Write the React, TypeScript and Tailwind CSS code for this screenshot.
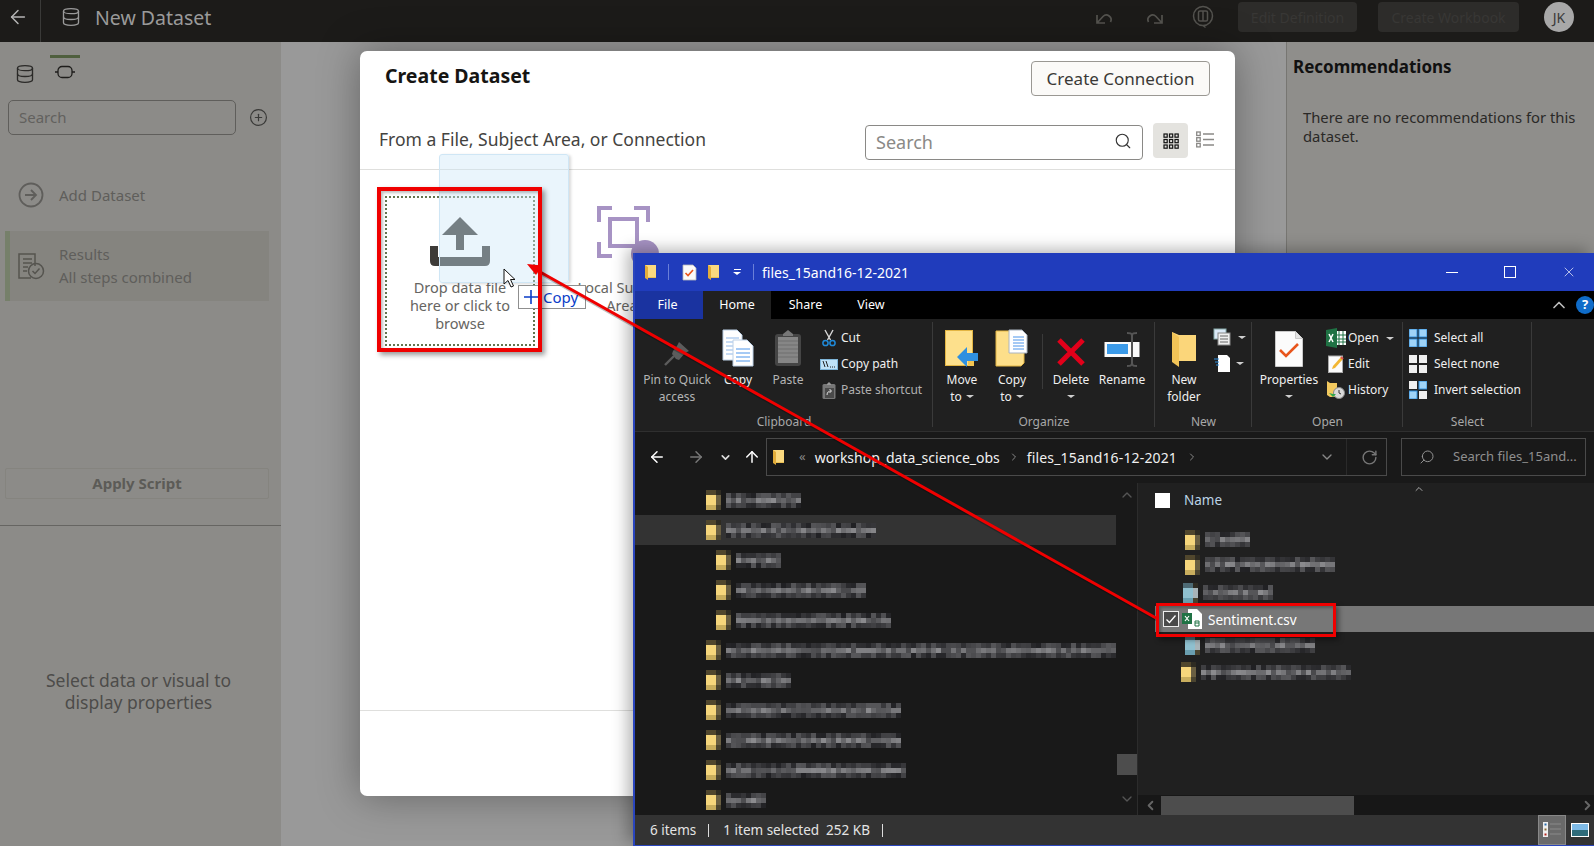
import React from "react";
import { ArrowLeft, ArrowRight, ArrowUp, ChevronDown, ChevronLeft, ChevronRight, ChevronUp, CirclePlus, Database, RotateCw, Search, X } from "lucide-react";

const Caret = ({ className = "" }: { className?: string }) => (
  <span className={"inline-block w-0 h-0 border-l-[4px] border-r-[4px] border-t-[3px] border-l-transparent border-r-transparent border-t-[#cfcfcf] " + className} />
);

function rnd(seed: number, i: number) {
  const x = Math.sin(seed * 97.13 + i * 12.9898) * 43758.5453;
  return x - Math.floor(x);
}

function Mosaic({ w, seed }: { w: number; seed: number }) {
  const cols = Math.ceil(w / 5);
  const cells: React.ReactNode[] = [];
  for (let r = 0; r < 3; r++) {
    for (let c = 0; c < cols; c++) {
      const v = rnd(seed, r * 100 + c);
      const g = Math.round(r === 1 ? 72 + v * 68 : 32 + v * 55);
      cells.push(
        <rect key={r + "-" + c} x={c * 5} y={r * 5} width={5} height={5} fill={`rgb(${g},${g},${g + 3})`} />
      );
    }
  }
  return (
    <svg width={w} height={15} shapeRendering="crispEdges" className="shrink-0">
      {cells}
    </svg>
  );
}

const PixelFolder = ({ ice = false }: { ice?: boolean }) => {
  const main = ice ? "#8fc0cf" : "#f6d67c";
  const low = ice ? "#6a9fb0" : "#c9ae5e";
  const side = ice ? "#a8b4b8" : "#6a5f42";
  const top = ice ? "#4d6a74" : "#51472d";
  return (
    <svg width={15} height={20} shapeRendering="crispEdges" className="shrink-0">
      <rect x={0} y={0} width={10} height={5} fill={top} />
      <rect x={10} y={0} width={5} height={5} fill="#2e2b22" />
      <rect x={0} y={5} width={10} height={10} fill={main} />
      <rect x={10} y={5} width={5} height={10} fill={side} />
      <rect x={0} y={15} width={10} height={5} fill={low} />
      <rect x={10} y={15} width={5} height={5} fill="#4a4430" />
    </svg>
  );
};

const SmallFolder = () => (
  <svg width={13} height={17} viewBox="0 0 13 17" className="shrink-0">
    <path d="M1 1h11v12H1z" fill="#fbd97f" />
    <path d="M1 1l3 2v13l-3-2z" fill="#e3ad3a" />
    <path d="M4 13h8v1H4z" fill="#e9bf55" />
  </svg>
);

const Checklist = () => (
  <svg width={15} height={17} viewBox="0 0 15 17" className="shrink-0">
    <path d="M1 1h10l3 3v12H1z" fill="#fafafa" stroke="#b9b9b9" strokeWidth={0.8} />
    <path d="M3.5 9l2.5 2.5L11 6" stroke="#e8551c" strokeWidth={1.6} fill="none" />
  </svg>
);

const CopyIcon = () => (
  <svg width={32} height={38} viewBox="0 0 32 38">
    <path d="M1 1h14l5 5v25H1z" fill="#fff" stroke="#bcd0e6" />
    <path d="M4 9h13M4 13h13M4 17h13M4 21h13M4 25h13" stroke="#8fb7e8" />
    <path d="M11 11h14l6 6v20H11z" fill="#fff" stroke="#bcd0e6" />
    <path d="M14 20h14M14 24h14M14 28h14M14 32h14" stroke="#4d95ea" />
  </svg>
);
const PasteIcon = () => (
  <svg width={28} height={38} viewBox="0 0 28 38">
    <rect x={1} y={5} width={26} height={32} rx={3} fill="#454545" />
    <path d="M9 5l5-4 5 4v2H9z" fill="#777" />
    <rect x={4} y={8} width={20} height={26} fill="#868686" />
    <path d="M4 12h20M4 16h20M4 20h20M4 24h20M4 28h20" stroke="#6f6f6f" />
  </svg>
);
const PinIcon = () => (
  <svg width={26} height={26} viewBox="0 0 26 26">
    <path d="M15 1l10 9-4 2-6 7-3-1-4-5 1-3 4-5z" fill="#5c5c5c" />
    <path d="M10 15L1 24" stroke="#5c5c5c" strokeWidth={2.4} />
  </svg>
);
const ScissorsIcon = () => (
  <svg width={14} height={18} viewBox="0 0 14 18">
    <path d="M3 1l5.5 10M11 1L5.5 11" stroke="#d8d8d8" strokeWidth={1.4} />
    <circle cx={3.5} cy={14} r={2.6} fill="none" stroke="#1f8ad9" strokeWidth={1.5} />
    <circle cx={10.5} cy={14} r={2.6} fill="none" stroke="#1f8ad9" strokeWidth={1.5} />
  </svg>
);
const PathIcon = () => (
  <svg width={18} height={11} viewBox="0 0 18 11">
    <rect x={0.5} y={0.5} width={17} height={10} fill="#bfe2f7" stroke="#7fb5d8" />
    <path d="M3 2l2 6M6 2l2 6" stroke="#222" strokeWidth={1} />
    <path d="M10 8h1M12 8h1M14 8h1" stroke="#222" />
  </svg>
);
const ShortcutIcon = () => (
  <svg width={14} height={17} viewBox="0 0 14 17">
    <rect x={0.5} y={2} width={13} height={15} rx={1.5} fill="#777" />
    <path d="M5 2l2-2 2 2v1H5z" fill="#999" />
    <rect x={3} y={6} width={9} height={10} fill="#4a4a4a" />
    <path d="M5 13c0-3 2-4 4-4M7.5 7l2 2-2 2" stroke="#ddd" fill="none" />
  </svg>
);
const MoveToIcon = () => (
  <svg width={34} height={37} viewBox="0 0 34 37">
    <rect x={0.5} y={0.5} width={27} height={35} fill="#fde08c" stroke="#e3b543" />
    <rect x={23} y={25} width={6} height={11} fill="#f3c552" />
    <path d="M12 27l10-10v6h11v8H22v6z" fill="#2f90e0" />
  </svg>
);
const CopyToIcon = () => (
  <svg width={34} height={38} viewBox="0 0 34 38">
    <path d="M1 2h16v2h12v30l-3 3H1z" fill="#fddf8a" stroke="#e3b543" />
    <path d="M14 1h13l5 5v18H14z" fill="#fff" stroke="#aab4c0" />
    <path d="M18 8h11M18 11h11M18 14h11M18 17h11M18 20h11" stroke="#4d95ea" />
  </svg>
);
const DeleteIcon = () => (
  <svg width={30} height={30} viewBox="0 0 30 30">
    <path d="M3 3l24 24M27 3L3 27" stroke="#e2001a" strokeWidth={5} />
  </svg>
);
const RenameIcon = () => (
  <svg width={36} height={35} viewBox="0 0 36 35">
    <rect x={0.5} y={10} width={35} height={15} fill="#fafafa" />
    <rect x={3} y={12} width={21} height={10} fill="#3b9ae8" />
    <path d="M23 1c3 0 5 0 5 3v27c0 3-2 3-5 3M33 1c-3 0-5 0-5 3v27c0 3 2 3 5 3" stroke="#555" strokeWidth={2} fill="none" />
  </svg>
);
const NewFolderIcon = () => (
  <svg width={24} height={36} viewBox="0 0 24 36">
    <path d="M0 1l7 3h17v26H7z" fill="#fbd67a" />
    <path d="M0 1l7 5v30l-7-5z" fill="#f1c357" />
  </svg>
);
const NewItemIcon = () => (
  <svg width={20} height={19} viewBox="0 0 20 19">
    <rect x={1} y={1} width={12} height={10} fill="#dbe9f7" stroke="#8aa" />
    <rect x={5} y={5} width={12} height={12} fill="#efefef" stroke="#888" />
    <path d="M7 8h8M7 11h8M7 14h8" stroke="#666" />
  </svg>
);
const NewDocIcon = () => (
  <svg width={18} height={19} viewBox="0 0 18 19">
    <path d="M5 1h9l3 3v14H5z" fill="#fff" />
    <path d="M1 5h5M2 8h4M3 11h3" stroke="#2f90e0" />
  </svg>
);
const PropsIcon = () => (
  <svg width={28} height={36} viewBox="0 0 28 36">
    <path d="M0.5 0.5h20l7 7v28h-27z" fill="#fbfbfb" stroke="#c9c9c9" />
    <path d="M20.5 0.5v7h7" fill="#e4e4e4" stroke="#c9c9c9" />
    <path d="M5 19l6 6L23 13" stroke="#e8551c" strokeWidth={2.6} fill="none" />
  </svg>
);
const ExcelIcon = () => (
  <svg width={20} height={20} viewBox="0 0 20 20">
    <path d="M10 3h10v14H10z" fill="#fff" />
    <path d="M13 3v14M17 3v14M10 7h10M10 11h10M10 14h10" stroke="#1f7244" />
    <path d="M0 2l11-2v20L0 18z" fill="#1f7244" />
    <path d="M3 6l4 8M7 6l-4 8" stroke="#fff" strokeWidth={1.5} />
  </svg>
);
const EditIcon = () => (
  <svg width={17} height={18} viewBox="0 0 17 18">
    <rect x={0.5} y={1} width={14} height={16.5} fill="#fbfbfb" stroke="#aaa" />
    <path d="M4 14l1-3 8-9 2 2-8 9z" fill="#f2b632" />
    <path d="M13 2l2 2" stroke="#d9534f" strokeWidth={2} />
  </svg>
);
const HistoryIcon = () => (
  <svg width={18} height={18} viewBox="0 0 18 18">
    <path d="M0 0l3 2h7v14H3l-3-2z" fill="#f3c95f" />
    <circle cx={12} cy={12} r={5.5} fill="#d9d9d9" stroke="#888" />
    <path d="M12 9v3l2 1" stroke="#333" fill="none" />
    <path d="M2 12l4 4 3-3-3 0z" fill="#2fa84f" />
  </svg>
);
const GridIcon = ({ cells }: { cells: string[] }) => (
  <svg width={18} height={18} viewBox="0 0 18 18">
    <rect x={0} y={0} width={8} height={8} fill={cells[0]} stroke={cells[0] === "#9fd3f7" ? "#2f90e0" : "none"} />
    <rect x={10} y={0} width={8} height={8} fill={cells[1]} stroke={cells[1] === "#9fd3f7" ? "#2f90e0" : "none"} />
    <rect x={0} y={10} width={8} height={8} fill={cells[2]} stroke={cells[2] === "#9fd3f7" ? "#2f90e0" : "none"} />
    <rect x={10} y={10} width={8} height={8} fill={cells[3]} stroke={cells[3] === "#9fd3f7" ? "#2f90e0" : "none"} />
  </svg>
);

const Large = ({ w, lines, icon, caret, dim, inlineCaret }: { w: string; lines: string[]; icon: React.ReactNode; caret?: boolean; dim?: boolean; inlineCaret?: boolean }) => (
  <div className={"flex flex-col items-center shrink-0 " + w}>
    <div className="h-[38px] flex justify-center items-end">{icon}</div>
    <div className={"mt-[4px] text-center text-[12px] leading-[17px] " + (dim ? "text-[#b5b5b5]" : "text-[#efefef]")}>
      {lines.map((l, i) => (
        <div key={l} className="whitespace-nowrap flex items-center justify-center">
          {l}
          {inlineCaret && i === lines.length - 1 && <Caret className="ml-[4px]" />}
        </div>
      ))}
      {caret && lines.length === 1 && (
        <div className="h-[17px] flex items-center justify-center"><Caret /></div>
      )}
    </div>
  </div>
);

const SmallRow = ({ icon, text, dim, caret, box = "w-[23px] justify-center" }: { icon: React.ReactNode; text: string; dim?: boolean; caret?: boolean; box?: string }) => (
  <div className={"flex items-center h-[26px] text-[12px] whitespace-nowrap " + (dim ? "text-[#b0b0b0]" : "text-[#efefef]")}>
    <div className={"flex items-center shrink-0 " + box}>{icon}</div>
    <span>{text}</span>
    {caret && <Caret className="ml-[7px]" />}
  </div>
);

const Group = ({ w, label, children, pl }: { w: string; label: string; children: React.ReactNode; pl: string }) => (
  <div className={"relative flex flex-col shrink-0 h-full " + w}>
    <div className={"flex h-[93px] pt-[10px] " + pl}>{children}</div>
    <div className="pt-px text-center text-[12px] leading-[18px] text-[#a8a8a8]">{label}</div>
    <div className="absolute right-0 top-[3px] bottom-[4px] w-px bg-[#3a3a3a]" />
  </div>
);

const navRows: { pl: string; w: number; seed: number; selected?: boolean }[] = [
  { pl: "pl-[71px]", w: 75, seed: 1 },
  { pl: "pl-[71px]", w: 150, seed: 2, selected: true },
  { pl: "pl-[81px]", w: 45, seed: 3 },
  { pl: "pl-[81px]", w: 130, seed: 4 },
  { pl: "pl-[81px]", w: 155, seed: 5 },
  { pl: "pl-[71px]", w: 390, seed: 6 },
  { pl: "pl-[71px]", w: 65, seed: 7 },
  { pl: "pl-[71px]", w: 175, seed: 8 },
  { pl: "pl-[71px]", w: 175, seed: 9 },
  { pl: "pl-[71px]", w: 180, seed: 10 },
  { pl: "pl-[71px]", w: 40, seed: 11 },
];

const ExplorerWindow = () => (
  <div className="absolute left-[633px] top-[253px] z-20 w-[961px] h-[593px] flex flex-col border-l-2 border-b border-[#2a45bd] bg-[#202020] shadow-[-6px_-4px_14px_rgba(0,0,0,0.28)] font-['Noto_Sans',sans-serif] text-white">
    {/* Title bar */}
    <div className="h-[38px] shrink-0 bg-[#203cbc] flex items-center">
      <div className="ml-[9px]"><SmallFolder /></div>
      <div className="ml-[11px] w-px h-[16px] bg-[#6a7fd8]" />
      <div className="ml-[13px]"><Checklist /></div>
      <div className="ml-[10px]"><SmallFolder /></div>
      <div className="ml-[13px] flex flex-col items-center gap-[2px]">
        <div className="w-[7px] h-px bg-white" />
        <Caret className="border-t-white" />
      </div>
      <div className="ml-[12px] w-px h-[16px] bg-[#6a7fd8]" />
      <div className="ml-[8px] text-[14px] text-white">files_15and16-12-2021</div>
      <div className="ml-auto flex items-center">
        <div className="w-[12px] h-px bg-white mr-[46px]" />
        <div className="w-[12px] h-[12px] border border-white mr-[45px]" />
        <X size={16} strokeWidth={1} className="text-white mr-[17px]" />
      </div>
    </div>
    {/* Tabs */}
    <div className="h-[28px] shrink-0 bg-black flex items-stretch text-[12.5px]">
      <div className="w-[68px] bg-[#1a33a0] flex items-center justify-center pr-[3px]">File</div>
      <div className="w-[68px] bg-[#202020] flex items-center justify-center">Home</div>
      <div className="w-[69px] flex items-center justify-center">Share</div>
      <div className="w-[62px] flex items-center justify-center">View</div>
      <div className="ml-auto flex items-center">
        <ChevronUp size={20} className="text-[#bdbdbd] mr-[7px]" />
        <div className="w-[18px] h-[18px] rounded-full bg-[#0f6cc9] flex items-center justify-center text-[13px] font-bold">?</div>
      </div>
    </div>
    {/* Ribbon */}
    <div className="h-[113px] shrink-0 bg-[#202020] flex border-b border-[#2f2f2f]">
      <Group w="w-[298px]" label="Clipboard" pl="pl-[4px]">
        <Large w="w-[76px]" lines={["Pin to Quick", "access"]} icon={<PinIcon />} dim />
        <Large w="w-[46px]" lines={["Copy"]} icon={<CopyIcon />} />
        <Large w="w-[54px]" lines={["Paste"]} icon={<PasteIcon />} dim />
        <div className="-mt-[4px] ml-[2px] flex flex-col">
          <SmallRow icon={<ScissorsIcon />} text="Cut" box="w-[24px] justify-center" />
          <SmallRow icon={<PathIcon />} text="Copy path" box="w-[24px] justify-center" />
          <SmallRow icon={<ShortcutIcon />} text="Paste shortcut" dim box="w-[24px] justify-center" />
        </div>
      </Group>
      <Group w="w-[222px]" label="Organize" pl="pl-[5px]">
        <Large w="w-[48px]" lines={["Move", "to"]} icon={<MoveToIcon />} inlineCaret />
        <Large w="w-[52px]" lines={["Copy", "to"]} icon={<CopyToIcon />} inlineCaret />
        <div className="w-px h-[55px] bg-[#3a3a3a] mt-[5px] ml-[4px] mr-[4px]" />
        <Large w="w-[48px]" lines={["Delete"]} icon={<DeleteIcon />} caret />
        <Large w="w-[54px]" lines={["Rename"]} icon={<RenameIcon />} />
      </Group>
      <Group w="w-[97px]" label="New" pl="pl-[4px]">
        <Large w="w-[50px]" lines={["New", "folder"]} icon={<NewFolderIcon />} />
        <div className="-mt-[1px] ml-[4px] flex flex-col gap-[7px]">
          <div className="flex items-center gap-[5px]"><NewItemIcon /><Caret /></div>
          <div className="flex items-center gap-[5px]"><NewDocIcon /><Caret /></div>
        </div>
      </Group>
      <Group w="w-[151px]" label="Open" pl="pl-[6px]">
        <Large w="w-[62px]" lines={["Properties"]} icon={<PropsIcon />} caret />
        <div className="-mt-[4px] ml-[4px] flex flex-col">
          <SmallRow icon={<ExcelIcon />} text="Open" caret box="w-[24px] justify-center" />
          <SmallRow icon={<EditIcon />} text="Edit" box="w-[24px] justify-center" />
          <SmallRow icon={<HistoryIcon />} text="History" box="w-[24px] justify-center" />
        </div>
      </Group>
      <Group w="w-[129px]" label="Select" pl="pl-[6px]">
        <div className="-mt-[4px] flex flex-col">
          <SmallRow box="w-[25px] justify-start" icon={<GridIcon cells={["#9fd3f7", "#9fd3f7", "#9fd3f7", "#9fd3f7"]} />} text="Select all" />
          <SmallRow box="w-[25px] justify-start" icon={<GridIcon cells={["#efefef", "#efefef", "#efefef", "#efefef"]} />} text="Select none" />
          <SmallRow box="w-[25px] justify-start" icon={<GridIcon cells={["#efefef", "#9fd3f7", "#9fd3f7", "#efefef"]} />} text="Invert selection" />
        </div>
      </Group>
    </div>
    {/* Address */}
    <div className="h-[51px] shrink-0 bg-[#191919] flex items-center pb-px">
      <ArrowLeft size={18} strokeWidth={2} className="ml-[13px] text-white" />
      <ArrowRight size={18} strokeWidth={2} className="ml-[21px] text-[#777]" />
      <ChevronDown size={13} strokeWidth={3} className="ml-[14px] text-[#ddd]" />
      <ArrowUp size={18} strokeWidth={2} className="ml-[11px] text-white" />
      <div className="ml-[5px] w-[621px] h-[38px] border border-[#4a4a4a] flex items-center text-[14px] text-[#f0f0f0]">
        <div className="ml-[5px]"><SmallFolder /></div>
        <span className="ml-[14px] text-[#888] text-[13px]">«</span>
        <span className="ml-[9px]">workshop_data_science_obs</span>
        <ChevronRight size={12} className="ml-[8px] text-[#888]" />
        <span className="ml-[7px] tracking-[0.15px]">files_15and16-12-2021</span>
        <ChevronRight size={12} className="ml-[9px] text-[#888]" />
        <ChevronDown size={16} className="ml-auto mr-[11px] text-[#888]" />
        <div className="w-px h-full bg-[#2a2a2a]" />
        <RotateCw size={17} className="ml-[14px] mr-[8px] text-[#777]" />
      </div>
      <div className="ml-[14px] w-[185px] h-[38px] border border-[#4a4a4a] flex items-center text-[13px] text-[#8f8f8f]">
        <Search size={16} strokeWidth={1.4} className="ml-[17px] -scale-x-100 text-[#999]" />
        <span className="ml-[18px] whitespace-nowrap">Search files_15and...</span>
      </div>
    </div>
    {/* Body */}
    <div className="h-[332px] shrink-0 flex">
      <div className="w-[481px] shrink-0 bg-[#191919] pt-[2px]">
        {navRows.map((r) => (
          <div key={r.seed} className={"h-[30px] flex items-center gap-[5px] " + r.pl + (r.selected ? " bg-[#333333]" : "")}>
            <PixelFolder />
            <Mosaic w={r.w} seed={r.seed} />
          </div>
        ))}
      </div>
      <div className="w-[21px] shrink-0 bg-[#191919] flex flex-col items-center text-[#555]">
        <ChevronUp size={16} className="mt-[4px]" />
        <div className="mt-[251px] w-[20px] h-[21px] bg-[#4d4d4d]" />
        <ChevronDown size={16} className="mt-[16px]" />
      </div>
      <div className="w-px shrink-0 bg-[#2c2c2c]" />
      <div className="flex-1 min-w-0 flex flex-col relative">
        <ChevronUp size={12} className="absolute left-[275px] top-0 text-[#aaa]" />
        <div className="flex-1">
          <div className="h-[34px] flex items-center pl-[17px] pt-px text-[13.5px] text-[#bcd3e6]">
            <div className="w-[15px] h-[15px] bg-white" />
            <span className="ml-[14px]">Name</span>
          </div>
          <div className="mt-[10px] h-[25px] flex items-center gap-[5px] pl-[47px]"><PixelFolder /><Mosaic w={45} seed={21} /></div>
          <div className="h-[25px] flex items-center gap-[5px] pl-[47px]"><PixelFolder /><Mosaic w={130} seed={22} /></div>
          <div className="mt-[3px] h-[25px] flex items-center gap-[5px] pl-[45px]"><PixelFolder ice /><Mosaic w={70} seed={23} /></div>
          <div className="mt-px h-[26px] ml-[17px] bg-[#777777] flex items-center pl-[8px]">
            <div className="w-[16px] h-[16px] bg-[#4a4a4a] border border-[#eee] flex items-center justify-center">
              <svg width={12} height={12} viewBox="0 0 12 12"><path d="M1.5 6.5l3 3 6-7" stroke="#fff" strokeWidth={1.3} fill="none" /></svg>
            </div>
            <svg width={20} height={20} viewBox="0 0 20 20" className="ml-[3px]">
              <path d="M6 0h9l5 5v15H6z" fill="#fff" />
              <path d="M13 12h4v5h-4zM13 14h4" fill="none" stroke="#1f7244" />
              <rect x={0} y={4} width={10} height={11} fill="#1f7244" />
              <path d="M3 7l4 5M7 7l-4 5" stroke="#fff" strokeWidth={1.2} />
            </svg>
            <span className="ml-[6px] pt-[3px] text-[13.5px] text-white">Sentiment.csv</span>
          </div>
          <div className="h-[26px] flex items-center gap-[5px] pl-[47px]"><PixelFolder ice /><Mosaic w={110} seed={24} /></div>
          <div className="mt-px h-[26px] flex items-center gap-[5px] pl-[43px]"><PixelFolder /><Mosaic w={150} seed={25} /></div>
        </div>
        <div className="h-[20px] shrink-0 flex items-center bg-[#171717] text-[#666]">
          <ChevronLeft size={15} strokeWidth={3} className="ml-[5px] shrink-0" />
          <div className="ml-[3px] w-[193px] h-[19px] bg-[#4d4d4d] shrink-0" />
          <ChevronRight size={15} strokeWidth={3} className="ml-auto mr-[-1px]" />
        </div>
      </div>
    </div>
    {/* Status */}
    <div className="h-[30px] shrink-0 bg-[#333333] flex items-center text-[13.5px] text-[#e4e4e4] pl-[15px]">
      <span>6 items</span>
      <div className="ml-[12px] w-px h-[13px] bg-[#ddd]" />
      <span className="ml-[14px]">1 item selected</span>
      <span className="ml-[7px]">252 KB</span>
      <div className="ml-[12px] w-px h-[13px] bg-[#ddd]" />
      <div className="ml-auto h-full w-[28px] bg-[#6a6a6a] border border-[#888] flex items-center justify-center">
        <svg width={18} height={16} viewBox="0 0 18 16">
          <rect x={0} y={0} width={5} height={15} fill="#eee" />
          <rect x={1.5} y={1.5} width={2} height={2} fill="#2b6fb0" />
          <rect x={1.5} y={6.5} width={2} height={2} fill="#8a6f3a" />
          <rect x={1.5} y={11.5} width={2} height={2} fill="#b8241c" />
          <path d="M7 2h11M7 7h11M7 12h11" stroke="#8a8a8a" />
        </svg>
      </div>
      <div className="ml-[5px] mr-[5px] w-[18px] h-[14px] bg-white p-px flex flex-col">
        <div className="flex-1 bg-[#7fbbe8]" />
        <div className="flex-1 bg-[#2e6b7a]" />
      </div>
    </div>
  </div>
);

const TopBar = () => (
  <header className="h-[42px] shrink-0 bg-[#1c1b19] flex items-center pb-[8px] text-[#9a9a9a]">
    <ArrowLeft size={22} strokeWidth={1.6} className="ml-[7px] text-[#b5b5b5]" />
    <div className="ml-[11px] w-px h-[42px] -mb-[8px] -mt-[1px] bg-[#3a3a38]" />
    <Database size={20} strokeWidth={1.6} className="ml-[20px] text-[#9a9a9a]" />
    <span className="ml-[14px] pt-[2px] text-[19.5px]">New Dataset</span>
    <div className="ml-auto flex items-center">
      <svg width={20} height={16} viewBox="0 0 20 16" fill="none" stroke="#54534f" strokeWidth={1.7} className="mr-[31px]">
        <path d="M3 6v8h8M3 14L9 7.5a4.7 4.7 0 0 1 7.5 5.5" />
      </svg>
      <svg width={20} height={16} viewBox="0 0 20 16" fill="none" stroke="#54534f" strokeWidth={1.7} className="mr-[27px]">
        <path d="M17 6v8H9M17 14L11 7.5a4.7 4.7 0 0 0-7.5 5.5" />
      </svg>
      <svg width={22} height={24} viewBox="0 0 22 24" fill="none" stroke="#54534f" strokeWidth={1.5} className="mr-[24px]">
        <circle cx={11} cy={11} r={9.5} />
        <rect x={6.5} y={6} width={9} height={10} rx={1.5} />
        <path d="M11 6v10M11 20.5l2.5 2" />
      </svg>
      <div className="w-[119px] h-[30px] rounded-[4px] bg-[#2d2c2a] flex items-center justify-center text-[14px] text-[#383735]">Edit Definition</div>
      <div className="ml-[21px] w-[141px] h-[30px] rounded-[4px] bg-[#2d2c2a] flex items-center justify-center text-[14px] text-[#383735]">Create Workbook</div>
      <div className="ml-[25px] mr-[20px] w-[30px] h-[30px] rounded-full bg-[#a8a8a8] flex items-center justify-center text-[14px] text-[#3a3a3a]">JK</div>
    </div>
  </header>
);

const LeftPanel = () => (
  <aside className="w-[281px] shrink-0 bg-[#8c8b88] flex flex-col text-[#5f5e5b]">
    <div className="flex pl-[15px] pt-[13px] h-[58px]">
      <Database size={20} strokeWidth={1.6} className="mt-[9px] text-[#2b2a28]" />
      <div className="ml-[15px] w-[30px] h-[26px] border-t-[3px] border-[#4f5f3e] flex justify-center pt-[7px]">
        <svg width={22} height={14} viewBox="0 0 22 14" fill="none" stroke="#1e1d1b" strokeWidth={1.3}>
          <rect x={4} y={1.5} width={14} height={11} rx={4} />
          <path d="M1 7h3M18 7h3" />
        </svg>
      </div>
    </div>
    <div className="flex items-center pl-[8px]">
      <div className="w-[228px] h-[35px] rounded-[5px] border border-[#5f5e5b] flex items-center pl-[10px] text-[15px] text-[#62615e]">Search</div>
      <CirclePlus size={19} strokeWidth={1.5} className="ml-[13px] text-[#3a3a38]" />
    </div>
    <div className="mt-[47px] flex items-center pl-[18px] h-[26px]">
      <svg width={26} height={26} viewBox="0 0 26 26" fill="none" stroke="#5f5e5b" strokeWidth={1.8}>
        <circle cx={13} cy={13} r={11.5} />
        <path d="M7 13h11M13 8l5 5-5 5" />
      </svg>
      <span className="ml-[15px] text-[15px]">Add Dataset</span>
    </div>
    <div className="mt-[23px] mx-[5px] w-[264px] h-[70px] bg-[#85847f] border-l-[5px] border-[#76806a] flex items-center">
      <svg width={28} height={28} viewBox="0 0 28 28" fill="none" stroke="#55544f" strokeWidth={1.5} className="ml-[7px]">
        <path d="M18 14V2H2v24h12" />
        <path d="M6 7h9M6 11h9M6 15h5M6 19h4" />
        <circle cx={19} cy={19} r={7.5} />
        <path d="M15.5 19l2.5 2.5 4.5-5" />
      </svg>
      <div className="ml-[14px] text-[15px] leading-[23px]">
        <div>Results</div>
        <div>All steps combined</div>
      </div>
    </div>
    <div className="mt-[167px] mx-[5px] w-[264px] h-[31px] rounded-[2px] border border-[#85847f] flex items-center justify-center text-[15px] font-bold text-[#5c5b57]">Apply Script</div>
    <div className="mt-[26px] flex-1 border-t border-[#666562] flex items-center justify-center pt-[9px] pr-[4px] text-center text-[17.5px] leading-[22px] text-[#4d4c4a]">
      <div>Select data or visual to<br />display properties</div>
    </div>
  </aside>
);

const RightPanel = () => (
  <aside className="w-[308px] shrink-0 bg-[#8f8e8b] border-l border-[#777672] pl-[6px] text-[#2a2927]">
    <div className="mt-[13px] text-[17px] font-bold leading-[24px] text-[#111]">Recommendations</div>
    <div className="mt-[29px] ml-[10px] text-[14.8px] leading-[19px] w-[280px]">There are no recommendations for this dataset.</div>
  </aside>
);

const Dialog = () => (
  <div className="absolute left-[79px] top-[9px] w-[875px] h-[745px] rounded-[7px] bg-white shadow-[0_0_40px_rgba(0,0,0,0.35)] flex flex-col text-[#262523]">
    <div className="h-[74px] shrink-0 flex justify-between pl-[25px] pr-[25px]">
      <div className="pt-[12px] text-[19.5px] font-bold leading-[26px] text-[#161513]">Create Dataset</div>
      <div className="mt-[10px] w-[179px] h-[35px] rounded-[4px] border border-[#9a9893] bg-[#fbfaf8] flex items-center justify-center text-[17px] text-[#3a3936]">Create Connection</div>
    </div>
    <div className="h-[44px] shrink-0 flex items-start pl-[19px] border-b border-[#dfdfdd] box-content">
      <div className="text-[17.5px] leading-[24px] pt-[2px] text-[#44433f]">From a File, Subject Area, or Connection</div>
      <div className="ml-auto w-[278px] h-[35px] rounded-[4px] border border-[#8a8986] flex items-center pl-[10px] text-[18px] text-[#8a8986]">
        Search
        <Search size={18} strokeWidth={1.5} className="ml-auto mr-[10px] -mt-[3px] text-[#333]" />
      </div>
      <div className="ml-[10px] -mt-[2px] w-[35px] h-[35px] rounded-[4px] bg-[#e4e3df] flex items-center justify-center">
        <svg width={16} height={16} viewBox="0 0 16 16" fill="none" stroke="#111" strokeWidth={1.2}>
          {[1, 6.5, 12].map((x) => [1, 6.5, 12].map((y) => <rect key={x + "-" + y} x={x} y={y} width={3.2} height={3.2} />))}
        </svg>
      </div>
      <svg width={18} height={17} viewBox="0 0 18 17" fill="none" stroke="#8a8986" strokeWidth={1.3} className="ml-[8px] mr-[21px] mt-[6px]">
        <rect x={0.7} y={1} width={3.5} height={3.5} />
        <rect x={0.7} y={6.7} width={3.5} height={3.5} />
        <rect x={0.7} y={12.4} width={3.5} height={3.5} />
        <path d="M7 3h11M7 8.5h11M7 14h11" />
      </svg>
    </div>
    <div className="relative flex-1 flex pl-[25px] pt-[26px] gap-[12px]">
      <div className="w-[150px] h-[150px] border-2 border-dotted border-[#64744f] flex flex-col items-center text-[14.5px] leading-[18px] text-[#666562] text-center">
        <svg width={60} height={49} viewBox="0 0 60 49" className="mt-[19px]">
          <path d="M30 0L48 18H12z" fill="#3d3b38" />
          <rect x={26} y={17} width={8} height={16} fill="#3d3b38" />
          <path d="M0 29h8v11h44V29h8v15q0 5-5 5H5q-5 0-5-5z" fill="#3d3b38" />
        </svg>
        <div className="mt-[12px]">Drop data file<br />here or click to<br />browse</div>
      </div>
      <div className="w-[150px] h-[150px] flex flex-col items-center text-[14.5px] leading-[18px] text-[#666562] text-center">
        <svg width={66} height={62} viewBox="0 0 66 62" className="mt-[10px] ml-[16px]" fill="none" stroke="#a793c4" strokeWidth={4}>
          <path d="M2 16V2h13M37 2h14v14M2 36v14h13" />
          <rect x={13} y={13} width={27} height={27} />
          <circle cx={48} cy={48} r={14} fill="#a793c4" stroke="none" />
        </svg>
        <div className="mt-[10px] whitespace-nowrap">Local Subject<br />Area</div>
      </div>
      <div className="absolute left-[79px] -top-[16px] w-[130px] h-[129px] rounded-[3px] border border-[#cfe6f5] bg-[#cbe7f8]/40 shadow-[2px_1px_3px_rgba(0,0,0,0.15)]" />
      <div className="absolute left-[158px] top-[115px] z-10 w-[68px] h-[24px] bg-white border border-[#8f8f8f] flex items-center pl-[5px] text-[15px] text-[#0a3dc8]">
        <svg width={14} height={14} viewBox="0 0 14 14" className="shrink-0" stroke="#0a3dc8" strokeWidth={1.6}><path d="M7 0v14M0 7h14" /></svg>
        <span className="ml-[5px]">Copy</span>
      </div>
      <svg width={13} height={20} viewBox="0 0 13 20" className="absolute left-[143px] top-[98px] z-10">
        <path d="M1 1v15l4-3.5L8 19l2.5-1-3-6.5H12z" fill="#fff" stroke="#111" strokeWidth={1} />
      </svg>
    </div>
    <div className="h-[86px] shrink-0 border-t border-[#dfdfdd]" />
  </div>
);

const Annotations = () => (
  <>
    <svg width={1594} height={846} className="absolute left-0 top-0 z-30 pointer-events-none">
      <path d="M1156 618L533 268" stroke="#000" strokeOpacity={0.25} strokeWidth={3} transform="translate(1 2)" />
      <path d="M1156 618L533 268" stroke="#f00000" strokeWidth={3} />
      <path d="M527 264l15 1.5-6 9.5z" fill="#f00000" />
    </svg>
    <div className="absolute left-[377px] top-[187px] z-30 w-[165px] h-[165px] border-[4px] border-[#f00000] shadow-[3px_3px_5px_rgba(0,0,0,0.4),inset_2px_2px_3px_rgba(0,0,0,0.25)]" />
    <div className="absolute left-[1156px] top-[603px] z-30 w-[180px] h-[34px] border-[3px] border-[#f00000] shadow-[3px_3px_5px_rgba(0,0,0,0.4),inset_2px_2px_3px_rgba(0,0,0,0.25)]" />
  </>
);

export default function App() {
  return (
    <div className="relative w-[1594px] h-[846px] overflow-hidden flex flex-col bg-[#999999] font-['Noto_Sans',sans-serif]">
      <TopBar />
      <main className="flex-1 flex min-h-0">
        <LeftPanel />
        <div className="relative flex-1 bg-[#999999]">
          <Dialog />
        </div>
        <RightPanel />
      </main>
      <ExplorerWindow />
      <Annotations />
    </div>
  );
}
